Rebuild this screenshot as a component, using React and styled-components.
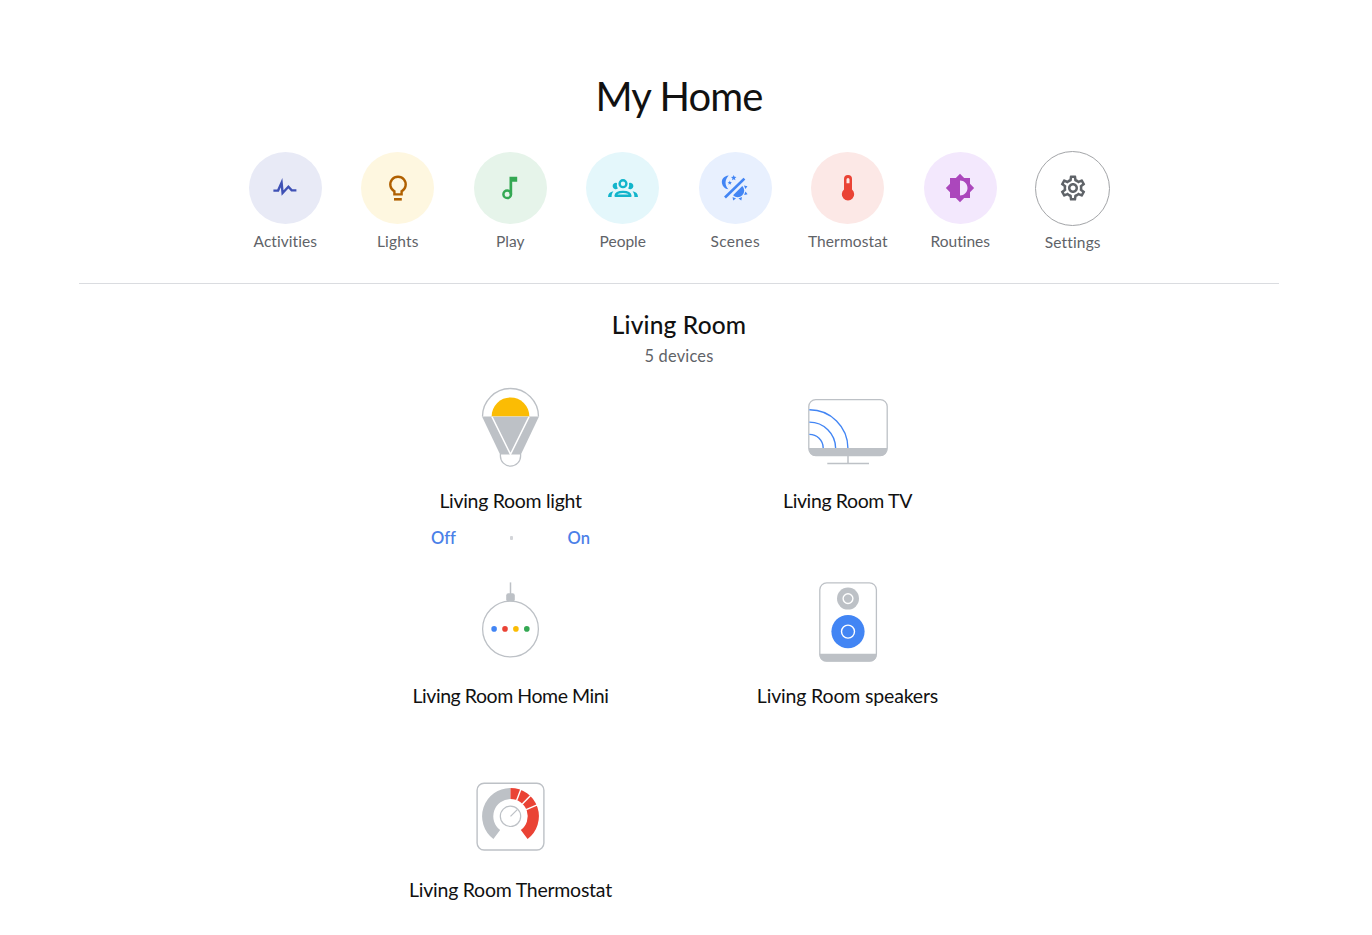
import React from "react";
import styled, { createGlobalStyle } from "styled-components";
import { MdBrightness6, MdOutlineSettings } from "react-icons/md";

const GlobalStyle = createGlobalStyle`
  html, body { margin: 0; background: #fff; }
  body {
    font-family: Lato, "Liberation Sans", sans-serif;
    font-variant-ligatures: none;
    color: #111;
    overflow: hidden;
  }
`;

const Page = styled.main`
  width: 1358px;
  height: 935px;
  box-sizing: border-box;
  padding-top: 72px;
  overflow: hidden;
`;
const Title = styled.h1`
  margin: 0;
  text-align: center;
  font-size: 40px;
  line-height: 48px;
  font-weight: 400;
  letter-spacing: ${(p) => p.$spacing}px;
`;
const Shortcuts = styled.nav`
  width: 1200px;
  height: 164px;
  margin: 0 auto;
  box-sizing: border-box;
  padding-top: 32px;
  border-bottom: 1px solid #dadce0;
  display: flex;
  justify-content: center;
`;
const Shortcut = styled.div`
  width: 112.5px;
  display: flex;
  flex-direction: column;
  align-items: center;
`;
const Disc = styled.div`
  width: 73px;
  height: 72px;
  border-radius: 50%;
  display: flex;
  align-items: center;
  justify-content: center;
  background: ${(p) => p.$bg};
  color: ${(p) => p.$color};
  ${(p) => p.$outlined && "height: 72px; padding-bottom: 1px; border: 1px solid #a3a5a8; margin: -1px 0;"}
  svg { display: block; }
`;
const ShortcutLabel = styled.span`
  margin-top: 7px;
  font-size: 15.5px;
  line-height: 20px;
  color: #5f6368;
  white-space: nowrap;
  letter-spacing: ${(p) => p.$spacing}px;
`;
const RoomName = styled.h2`
  margin: 26px 0 0;
  text-align: center;
  font-size: 24.5px;
  line-height: 30px;
  font-weight: 500;
  letter-spacing: ${(p) => p.$spacing}px;
`;
const DeviceCount = styled.p`
  margin: 6px 0 0;
  text-align: center;
  font-size: 16.4px;
  line-height: 20px;
  color: #5f6368;
  letter-spacing: ${(p) => p.$spacing}px;
`;
const Devices = styled.section`
  width: 674px;
  margin: 21.2px auto 0;
  display: grid;
  grid-template-columns: 1fr 1fr;
  grid-auto-rows: 194.5px;
`;
const Device = styled.article`
  display: flex;
  flex-direction: column;
  align-items: center;
  svg { display: block; }
`;
const DeviceName = styled.h3`
  margin: 22px 0 0;
  font-size: 19.5px;
  line-height: 24px;
  font-weight: 400;
  white-space: nowrap;
  letter-spacing: ${(p) => p.$spacing}px;
`;
const Controls = styled.div`
  width: 159px;
  margin-top: 14.8px;
  display: flex;
  justify-content: space-between;
  align-items: center;
`;
const Control = styled.button`
  border: 0;
  padding: 0;
  background: none;
  font: 600 16.5px/20px Lato, "Liberation Sans", sans-serif;
  font-variant-ligatures: none;
  color: #4a80e8;
`;
const Dot = styled.i`
  width: 3px;
  height: 4px;
  border-radius: 1px;
  background: #d3d5d9;
`;

const Glyph = ({ children }) => (
  <svg width="36" height="36" viewBox="-18 -18 36 36" fill="none">{children}</svg>
);
const star = (cx, cy, r) =>
  Array.from({ length: 10 }, (_, i) => {
    const a = (-90 + i * 36) * (Math.PI / 180);
    const q = i % 2 ? r * 0.45 : r;
    return `${cx + q * Math.cos(a)},${cy + q * Math.sin(a)}`;
  }).join(" ");
const ray = (deg) => (
  <path key={deg} transform={`translate(2.4 2.4) rotate(${deg})`} d="M7.9 -1.9L10.9 0L7.9 1.9Z" fill="currentColor" />
);

const ActivityIcon = () => (
  <Glyph><path d="M-11.6 2.6H-6.9L-3.4 -5.4L-2.4 5L3.4 -1.2L6.7 2.4H11.4" stroke="currentColor" strokeWidth="2.4" strokeMiterlimit="6" /></Glyph>
);
const BulbIcon = () => (
  <Glyph>
    <path d="M-3.6 6.4V3.2A7.7 7.7 0 1 1 3.6 3.2V6.4Z" stroke="currentColor" strokeWidth="2.4" />
    <path d="M-4 11.3H3.8" stroke="currentColor" strokeWidth="2.6" />
  </Glyph>
);
const NoteIcon = () => (
  <Glyph>
    <circle cx="-2.8" cy="6.2" r="3.8" stroke="currentColor" strokeWidth="2.5" />
    <path d="M-.5 6.2V-11.3H7.2V-6.2H2.2V6.2Z" fill="currentColor" />
  </Glyph>
);
const PeopleIcon = () => (
  <Glyph>
    <circle cx="0" cy="-4.3" r="3.4" stroke="currentColor" strokeWidth="2.4" />
    <path d="M-7.4 7.8C-7 4.6 -3.8 3.9 0 3.9S7 4.6 7.4 7.8Z" stroke="currentColor" strokeWidth="2.4" strokeLinejoin="round" />
    <path d="M-6 -4.9A3.2 3.2 0 1 0 -5.2 .6A7.5 7.5 0 0 1 -6 -4.9ZM6 -4.9A3.2 3.2 0 1 1 5.2 .6A7.5 7.5 0 0 0 6 -4.9Z" fill="currentColor" />
    <path d="M-9.6 3.2C-13 3.7 -15 5.5 -15 9H-11.4C-11.4 6.5 -10.8 4.8 -9.6 3.2ZM9.6 3.2C13 3.7 15 5.5 15 9H11.4C11.4 6.5 10.8 4.8 9.6 3.2Z" fill="currentColor" />
  </Glyph>
);
const ScenesIcon = () => (
  <Glyph>
    <path d="M-10 9.5L9.4 -9.4" stroke="currentColor" strokeWidth="2.7" />
    <path d="M-6.3 -12.6C-11.5 -12 -13.8 -8.6 -13 -4.6C-12.5 -1.7 -10.3 .8 -6.6 1.3C-10.4 -3 -10.5 -8 -6.3 -12.6Z" fill="currentColor" />
    <path d="M-1.9 7.3L7.3 -1.9A6.4 6.4 0 0 1 -1.9 7.3Z" fill="currentColor" />
    <polygon points={star(-1.3, -10.1, 2.9)} fill="currentColor" />
    <polygon points={star(-5.2, -5.2, 2.3)} fill="currentColor" />
    {[-23, 21, 69, 113].map(ray)}
  </Glyph>
);
const ThermometerIcon = () => (
  <Glyph>
    <path fillRule="evenodd" d="M-4 -9A4 4 0 0 1 4 -9V1.6A6.2 6.2 0 1 1 -4 1.6ZM-1.5 -4.7H1.5V-8.5A1.5 1.5 0 0 0 -1.5 -8.5Z" fill="currentColor" />
  </Glyph>
);

const GRAY = "#bdc1c6";
const Art = ({ children }) => (
  <svg width="80" height="80" viewBox="0 0 80 80" fill="none">{children}</svg>
);
const LightArt = () => (
  <Art>
    <path d="M11.5 29.5A28 28 0 0 1 67.5 29.5" stroke={GRAY} strokeWidth="1.3" />
    <path d="M29.4 67V69A10.1 10.1 0 0 0 49.6 69V67" stroke={GRAY} strokeWidth="1.3" />
    <path d="M11 29.6H68L49.9 67.4H29.1Z" fill={GRAY} />
    <path d="M20.9 29.6L39.5 67.4L58.1 29.6" stroke="#fff" strokeWidth="1.5" />
    <path d="M20.7 29.2A18.8 18.8 0 0 1 58.3 29.2Z" fill="#fbbc04" />
  </Art>
);
const TvArt = () => (
  <Art>
    <path d="M1 61H79V62.5A6.5 6.5 0 0 1 72.5 69H7.5A6.5 6.5 0 0 1 1 62.5Z" fill={GRAY} />
    <rect x=".8" y="12.6" width="78.4" height="56" rx="7" stroke={GRAY} strokeWidth="1.3" />
    <path d="M40 68.5V76.4M19.3 76.4H61" stroke={GRAY} strokeWidth="1.5" />
    <path d="M1.4 22.8A38.4 38.4 0 0 1 39.9 61M1.4 35.1A26.2 26.2 0 0 1 27.6 61M1.4 47.4A13.8 13.8 0 0 1 15.2 61" stroke="#4285f4" strokeWidth="1.4" />
  </Art>
);
const MiniArt = () => (
  <Art>
    <path d="M39.5 .4V12" stroke={GRAY} strokeWidth="1.5" />
    <rect x="35.2" y="11.2" width="8.6" height="8.4" rx="2.2" fill={GRAY} />
    <circle cx="39.5" cy="47" r="27.9" stroke={GRAY} strokeWidth="1.3" />
    <circle cx="23.1" cy="46.9" r="2.8" fill="#4285f4" />
    <circle cx="34" cy="46.9" r="2.8" fill="#ea4335" />
    <circle cx="44.9" cy="46.9" r="2.8" fill="#fbbc04" />
    <circle cx="55.8" cy="46.9" r="2.8" fill="#34a853" />
  </Art>
);
const SpeakerArt = () => (
  <Art>
    <path d="M11.6 71.7H68.6V73A6.5 6.5 0 0 1 62 79.6H18.2A6.5 6.5 0 0 1 11.6 73Z" fill={GRAY} />
    <rect x="11.8" y=".8" width="56.6" height="78.4" rx="7" stroke={GRAY} strokeWidth="1.3" />
    <circle cx="40" cy="16.6" r="11" fill={GRAY} />
    <circle cx="40" cy="16.6" r="4.9" stroke="#fff" strokeWidth="1.4" />
    <circle cx="40" cy="49.6" r="16.6" fill="#4285f4" />
    <circle cx="40" cy="49.6" r="6.5" stroke="#fff" strokeWidth="1.4" />
  </Art>
);
const polar = (deg, r) => {
  const a = (deg * Math.PI) / 180;
  return `${39.5 + r * Math.sin(a)} ${40.3 - r * Math.cos(a)}`;
};
const ThermostatArt = () => (
  <Art>
    <rect x="6.1" y="7.2" width="66.8" height="66.8" rx="7" stroke={GRAY} strokeWidth="1.4" />
    <path d={`M${polar(-143, 22.8)}A22.8 22.8 0 0 1 ${polar(0, 22.8)}`} stroke={GRAY} strokeWidth="11.2" />
    <path d={`M${polar(0, 22.8)}A22.8 22.8 0 0 1 ${polar(143, 22.8)}`} stroke="#ea4335" strokeWidth="11.2" />
    {[21, 44, 67].map((d) => (
      <path key={d} d={`M${polar(d, 17)}L${polar(d, 29)}`} stroke="#fff" strokeWidth="1.4" />
    ))}
    <circle cx="39.5" cy="40.3" r="10.2" stroke={GRAY} strokeWidth="1.2" />
    <path d="M39.5 40.3L46.5 33.3" stroke={GRAY} strokeWidth="1.2" />
  </Art>
);

const shortcuts = [
  { label: "Activities", bg: "#e8eaf6", color: "#3f51b5", icon: <ActivityIcon />, spacing: 0.05 },
  { label: "Lights", bg: "#fef7e0", color: "#b06000", icon: <BulbIcon />, spacing: 0.2 },
  { label: "Play", bg: "#e6f4ea", color: "#34a853", icon: <NoteIcon />, spacing: 0 },
  { label: "People", bg: "#e4f7fb", color: "#12b5cb", icon: <PeopleIcon />, spacing: 0 },
  { label: "Scenes", bg: "#e8f0fe", color: "#4285f4", icon: <ScenesIcon />, spacing: 0.35 },
  { label: "Thermostat", bg: "#fce8e6", color: "#ea4335", icon: <ThermometerIcon />, spacing: 0.12 },
  { label: "Routines", bg: "#f3e8fd", color: "#ab47bc", icon: <MdBrightness6 size={30} />, spacing: 0 },
  { label: "Settings", bg: "#fff", color: "#5f6368", icon: <MdOutlineSettings size={30} />, spacing: 0.15, outlined: true },
];
const devices = [
  { name: "Living Room light", art: <LightArt />, spacing: -0.3, switchable: true },
  { name: "Living Room TV", art: <TvArt />, spacing: -0.38 },
  { name: "Living Room Home Mini", art: <MiniArt />, spacing: -0.45 },
  { name: "Living Room speakers", art: <SpeakerArt />, spacing: -0.17 },
  { name: "Living Room Thermostat", art: <ThermostatArt />, spacing: -0.25 },
];

export default function App() {
  return (
    <Page>
      <GlobalStyle />
      <Title $spacing={-0.85}>My Home</Title>
      <Shortcuts>
        {shortcuts.map((s) => (
          <Shortcut key={s.label}>
            <Disc $bg={s.bg} $color={s.color} $outlined={s.outlined}>{s.icon}</Disc>
            <ShortcutLabel $spacing={s.spacing}>{s.label}</ShortcutLabel>
          </Shortcut>
        ))}
      </Shortcuts>
      <RoomName $spacing={0.17}>Living Room</RoomName>
      <DeviceCount $spacing={0.2}>5 devices</DeviceCount>
      <Devices>
        {devices.map((d) => (
          <Device key={d.name}>
            {d.art}
            <DeviceName $spacing={d.spacing}>{d.name}</DeviceName>
            {d.switchable && (
              <Controls>
                <Control>Off</Control>
                <Dot />
                <Control>On</Control>
              </Controls>
            )}
          </Device>
        ))}
      </Devices>
    </Page>
  );
}
